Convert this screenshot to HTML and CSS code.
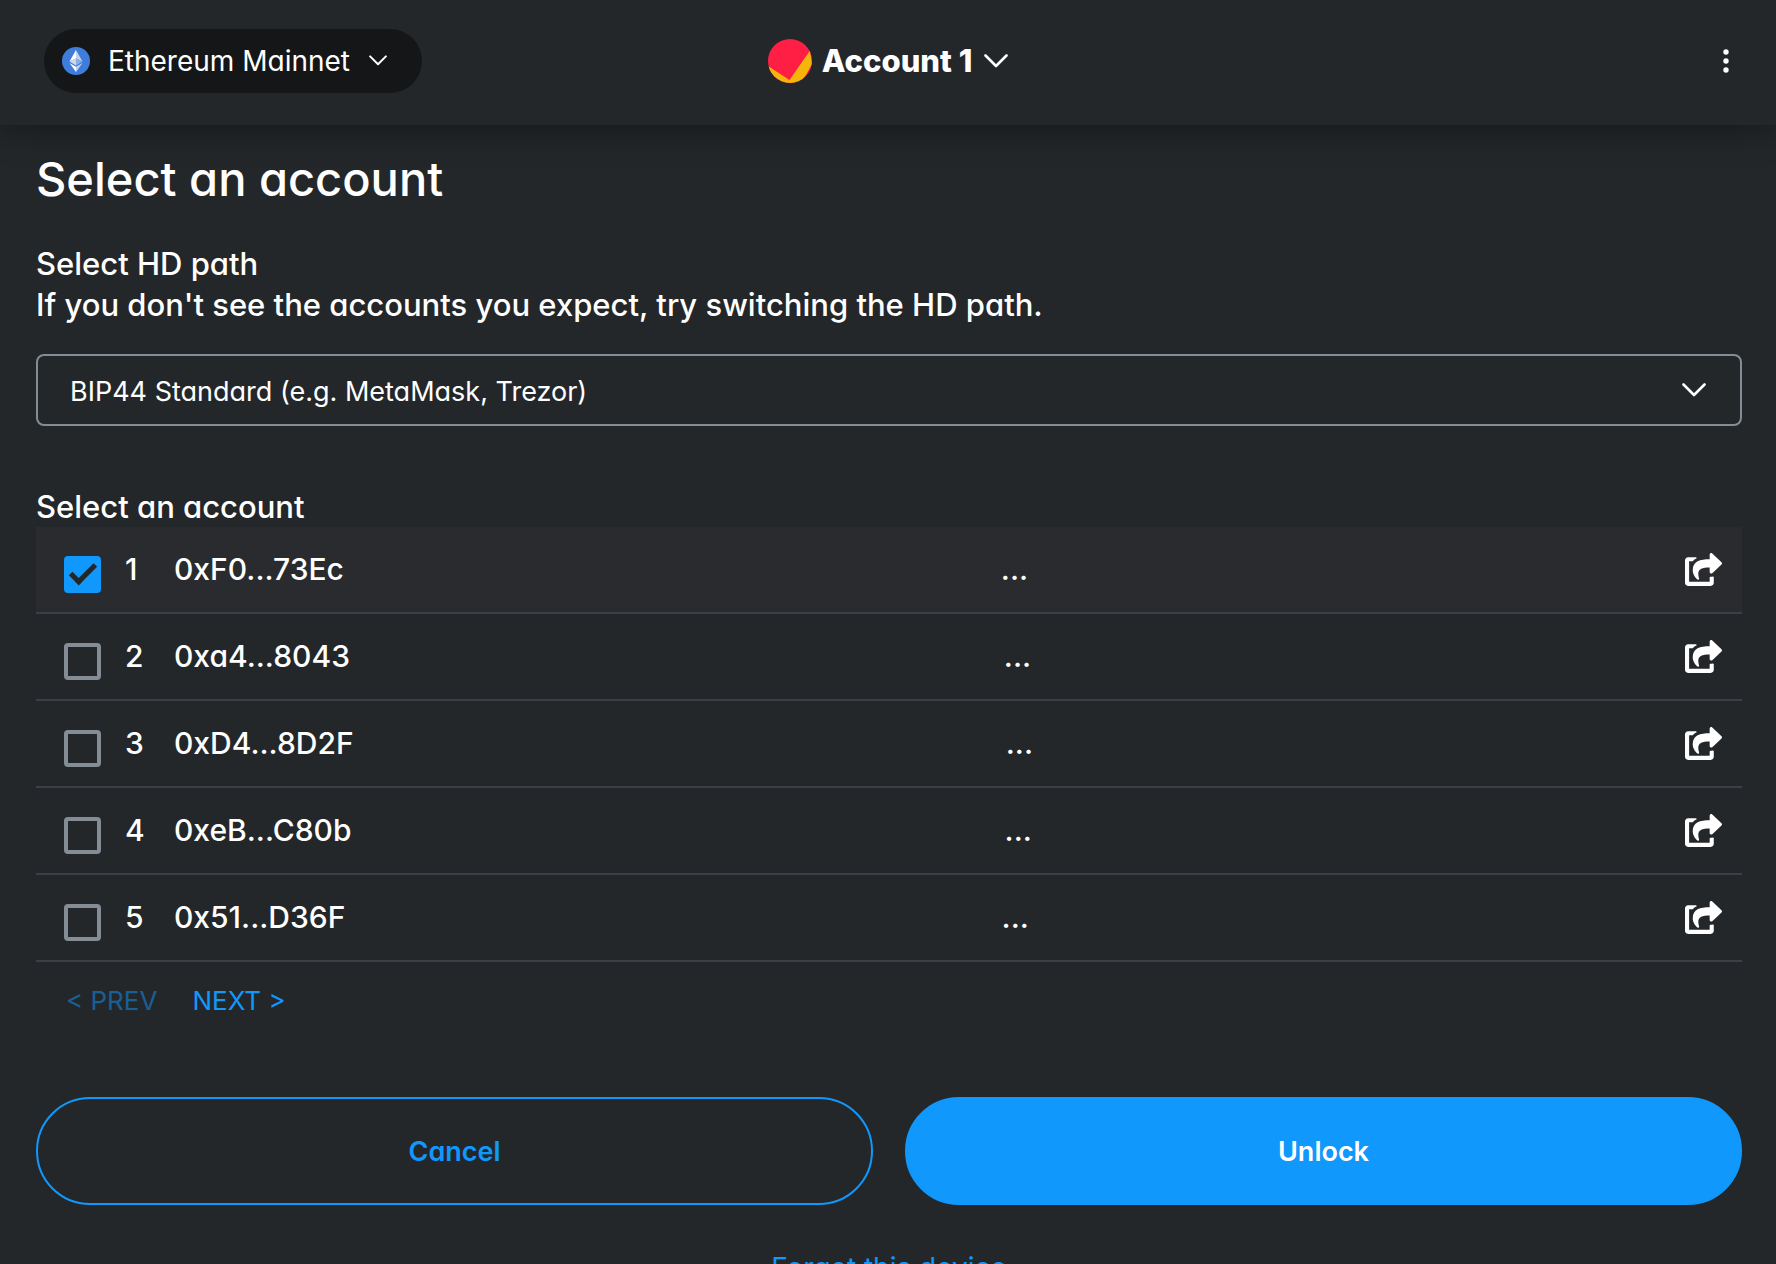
FILE: index.html
```html
<!DOCTYPE html>
<html lang="en">
<head>
    <meta charset="UTF-8">
    <meta name="viewport" content="width=device-width, initial-scale=1.0">
    <title>Select an account</title>
    <link rel="stylesheet" href="styles.css">
</head>
<body>
    <svg width="0" height="0" class="defs">
        <symbol id="chevron" viewBox="0 0 24 14">
            <path d="M1.5 1.5 12 12 22.5 1.5" fill="none" stroke="currentColor" stroke-width="2.6" stroke-linecap="round" stroke-linejoin="round"/>
        </symbol>
        <symbol id="share" viewBox="0 0 576 512">
            <path fill="currentColor" d="M568.482 177.448L424.479 313.433C409.3 327.768 384 317.14 384 295.985v-71.963c-144.575.97-205.566 35.113-164.775 171.353 4.483 14.973-12.846 26.567-25.006 17.33C155.252 383.105 120 326.488 120 269.339c0-143.937 117.599-172.5 264-173.312V24.012c0-21.174 25.317-31.768 40.479-17.448l144.003 135.988c10.02 9.463 10.028 25.425 0 34.896zM384 379.128V448H64V128h50.916a11.99 11.99 0 0 0 8.648-3.693c14.953-15.568 32.237-27.89 51.014-37.676C185.708 80.83 181.584 64 169.033 64H48C21.49 64 0 85.49 0 112v352c0 26.51 21.49 48 48 48h352c26.51 0 48-21.49 48-48v-88.806c0-8.288-8.197-14.066-16.011-11.302a71.83 71.83 0 0 1-34.189 3.377c-7.27-1.046-13.8 4.514-13.8 11.859z"/>
        </symbol>
    </svg>

    <header class="header">
        <div class="header-side">
            <button class="network">
                <svg class="eth" viewBox="0 0 28 28">
                    <circle cx="14" cy="14" r="14" fill="#3f7ddd"/>
                    <path d="M14 3v8.600L7.500 14.600z" fill="#fff"/>
                    <path d="M14 3v8.600l6.500 3z" fill="#c3d3ee"/>
                    <path d="M7.500 14.600 14 11.600v6.800z" fill="#d3d7df"/>
                    <path d="M20.500 14.600 14 11.600v6.800z" fill="#8aaee8"/>
                    <path d="M7.500 16 14 19.800V25z" fill="#fff"/>
                    <path d="M20.500 16 14 19.800V25z" fill="#c3d3ee"/>
                </svg>
                <span>Ethereum Mainnet</span>
                <svg class="chevron-sm"><use href="#chevron"/></svg>
            </button>
        </div>
        <button class="account">
            <svg class="avatar" viewBox="0 0 44 44">
                <clipPath id="round"><circle cx="22" cy="22" r="22"/></clipPath>
                <g clip-path="url(#round)">
                    <rect width="44" height="44" fill="#ff1f45"/>
                    <path d="M0 27 21.500 41 42 11.500 44 25 38 36 30 46H0z" fill="#f5b50a"/>
                </g>
            </svg>
            <span>Account 1</span>
            <svg class="chevron"><use href="#chevron"/></svg>
        </button>
        <div class="header-side end">
            <button class="menu" aria-label="Options">
                <svg viewBox="0 0 6 24" fill="#fff">
                    <circle cx="3" cy="3" r="2.700"/>
                    <circle cx="3" cy="12" r="2.700"/>
                    <circle cx="3" cy="21" r="2.700"/>
                </svg>
            </button>
        </div>
    </header>

    <main class="content">
        <h1>Select an account</h1>
        <label class="text" for="hd-path">Select HD path</label>
        <p class="text">If you don't see the accounts you expect, try switching the HD path.</p>
        <div class="dropdown">
            <select id="hd-path">
                <option>BIP44 Standard (e.g. MetaMask, Trezor)</option>
            </select>
            <svg class="chevron"><use href="#chevron"/></svg>
        </div>

        <h2 class="text">Select an account</h2>
        <ul class="list">
            <li class="row selected">
                <input type="checkbox" id="a1" checked>
                <label for="a1"><span class="num">1</span>0xF0...73Ec</label>
                <span class="balance">...</span>
                <a href="#" aria-label="View account 1"><svg class="share"><use href="#share"/></svg></a>
            </li>
            <li class="row">
                <input type="checkbox" id="a2">
                <label for="a2"><span class="num">2</span>0xa4...8043</label>
                <span class="balance">...</span>
                <a href="#" aria-label="View account 2"><svg class="share"><use href="#share"/></svg></a>
            </li>
            <li class="row">
                <input type="checkbox" id="a3">
                <label for="a3"><span class="num">3</span>0xD4...8D2F</label>
                <span class="balance">...</span>
                <a href="#" aria-label="View account 3"><svg class="share"><use href="#share"/></svg></a>
            </li>
            <li class="row">
                <input type="checkbox" id="a4">
                <label for="a4"><span class="num">4</span>0xeB...C80b</label>
                <span class="balance">...</span>
                <a href="#" aria-label="View account 4"><svg class="share"><use href="#share"/></svg></a>
            </li>
            <li class="row">
                <input type="checkbox" id="a5">
                <label for="a5"><span class="num">5</span>0x51...D36F</label>
                <span class="balance">...</span>
                <a href="#" aria-label="View account 5"><svg class="share"><use href="#share"/></svg></a>
            </li>
        </ul>

        <div class="pages">
            <button disabled>&lt; PREV</button>
            <button>NEXT &gt;</button>
        </div>

        <div class="actions">
            <button class="btn cancel">Cancel</button>
            <button class="btn unlock">Unlock</button>
        </div>
        <a href="#" class="forget">Forget this device</a>
    </main>
</body>
</html>
```
FILE: styles.css
```css
* {
    box-sizing: border-box;
}
body {
    margin: 0;
    height: 100vh;
    overflow: hidden;
    background: #24272a;
    color: white;
    font-family: Inter, Lato, sans-serif;
    font-feature-settings: "cv11";
    font-size: 28px;
}
button {
    padding: 0;
    border: none;
    background: none;
    color: inherit;
    font: inherit;
    font-feature-settings: inherit;
    cursor: pointer;
}
svg {
    display: block;
    flex: none;
}
.defs {
    position: absolute;
}
.header {
    display: flex;
    align-items: center;
    height: 125px;
    padding: 0 44px 4px;
    box-shadow: 0 4px 32px rgba(0, 0, 0, 0.4);
}
.header-side {
    flex: 1;
    display: flex;
}
.end {
    justify-content: flex-end;
}
.network {
    display: flex;
    align-items: center;
    width: 378px;
    height: 64px;
    padding: 0 35px 0 18px;
    border-radius: 32px;
    background: #141618;
}
.network span {
    margin: 0 auto 0 18px;
}
.eth {
    width: 28px;
    height: 28px;
}
.chevron-sm {
    width: 18px;
    height: 11px;
}
.chevron {
    width: 24px;
    height: 14px;
}
.account {
    display: flex;
    align-items: center;
    font-size: 31px;
    font-weight: 800;
}
.account span {
    margin: 0 12px 0 10px;
}
.avatar {
    width: 44px;
    height: 44px;
}
.menu {
    width: 12px;
}
.menu svg {
    width: 6px;
    height: 24px;
    margin: 0 auto;
}
.content {
    padding: 22px 34px 0 36px;
}
h1 {
    margin: 0 0 32px;
    font-size: 47px;
    font-weight: 500;
    line-height: 64px;
}
.text {
    display: block;
    margin: 0;
    font-size: 31px;
    font-weight: 500;
    line-height: 41px;
}
.dropdown {
    position: relative;
    margin: 29px 0 60px;
}
.dropdown select {
    appearance: none;
    display: block;
    width: 100%;
    height: 72px;
    padding: 2px 32px 0;
    border: 2px solid #848c96;
    border-radius: 8px;
    background: transparent;
    color: white;
    font: inherit;
    font-size: 27px;
    font-feature-settings: inherit;
}
.dropdown .chevron {
    position: absolute;
    right: 36px;
    top: 29px;
    pointer-events: none;
}
.list {
    margin: 0;
    padding: 0;
    list-style: none;
}
.row {
    display: flex;
    height: 87px;
    padding: 22px 20px 0 28px;
    border-bottom: 2px solid #3b4046;
    font-size: 30px;
    font-weight: 500;
    line-height: 41px;
}
.selected {
    background: #2a2b2f;
}
.row input {
    appearance: none;
    width: 37px;
    height: 37px;
    margin: 7px 24px 0 0;
    border: 4px solid #848c96;
    border-radius: 4px;
}
.row input:checked {
    border: none;
    background: #1098fc;
}
.row input:checked::before {
    content: "";
    display: block;
    box-sizing: border-box;
    width: 26px;
    height: 14px;
    margin: 8px 0 0 6px;
    border: solid #24272a;
    border-width: 0 0 5px 5px;
    transform: rotate(-45deg);
}
.num {
    display: inline-block;
    width: 49px;
}
.balance {
    margin: 0 auto;
}
.row a {
    color: white;
}
.share {
    width: 37px;
    height: 33px;
    margin-top: 4px;
}
.pages {
    display: flex;
    gap: 35px;
    padding: 21px 30px 0;
    color: #1098fc;
    font-size: 26px;
    line-height: 36px;
}
.pages button:disabled {
    opacity: 0.5;
}
.actions {
    display: flex;
    gap: 32px;
    margin-top: 78px;
}
.btn {
    flex: 1;
    height: 108px;
    border: 2px solid #1098fc;
    border-radius: 54px;
    font-size: 27px;
    font-weight: 600;
}
.cancel {
    color: #1098fc;
}
.unlock {
    background: #1098fc;
}
.forget {
    display: block;
    margin-top: 45px;
    color: #1098fc;
    line-height: 36px;
    text-align: center;
    text-decoration: none;
}
```
